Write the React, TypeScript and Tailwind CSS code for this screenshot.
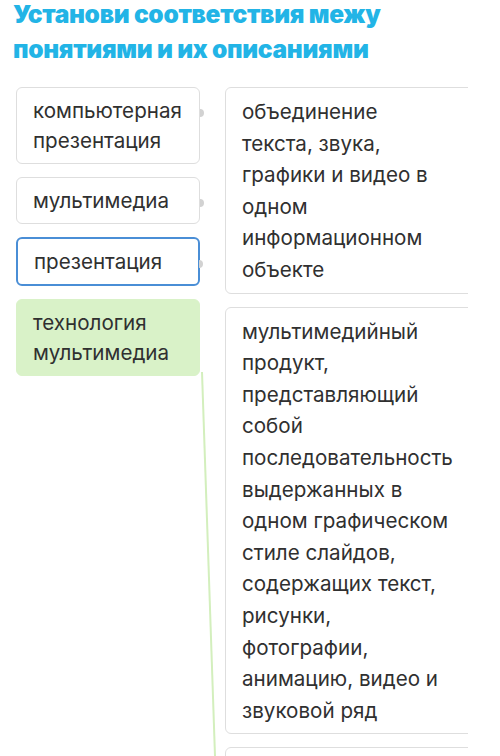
import React from 'react';

const left = [
  { text: 'компьютерная презентация', kind: 'plain' },
  { text: 'мультимедиа', kind: 'plain' },
  { text: 'презентация', kind: 'active' },
  { text: 'технология мультимедиа', kind: 'matched' },
];

// line breaks kept as in the app's narrow column
const right = [
  'объединение\nтекста, звука,\nграфики и видео в\nодном\nинформационном\nобъекте',
  'мультимедийный продукт, представляющий собой последовательность выдержанных в одном графическом стиле слайдов, содержащих текст, рисунки, фотографии, анимацию, видео и звуковой ряд',
  'изображение',
];

function Tab({ side }: { side: 'left' | 'right' }) {
  // little grey connector knob sitting on the card edge
  return (
    <span
      className={
        side === 'right'
          ? 'absolute -right-[5px] top-[21px] h-[8px] w-[4px] rounded-r-full bg-[#d2d2d2]'
          : 'absolute -left-[5px] top-[20px] h-[8px] w-[4px] rounded-l-full bg-[#d2d2d2]'
      }
    />
  );
}

export default function App() {
  return (
    <div className="relative h-[756px] w-[500px] overflow-hidden bg-white" style={{ fontFamily: 'Inter, "Noto Sans", sans-serif' }}>
      {/* Title */}
      <h1 className="-mt-[3px] pl-[13px] text-[24.5px] font-black leading-[35px] tracking-[-0.3px] text-[#22b4e6]">
        Установи соответствия межу
        <br />
        понятиями и их описаниями
      </h1>

      <div className="mt-[20px] flex pl-[16px]">
        {/* Concepts */}
        <div className="flex w-[184px] shrink-0 flex-col">
          {left.map((item, i) => (
            <div
              key={i}
              className={
                'relative rounded-[6px] px-[16px] pb-[7px] pt-[8px] text-[20.6px] leading-[30px] text-[#303030] ' +
                (i > 0 ? 'mt-[13px] ' : '') +
                (item.kind === 'active'
                  ? 'border-2 border-[#4a8ed6]'
                  : item.kind === 'matched'
                  ? 'border border-[#d9f2c8] bg-[#d9f2c8]'
                  : 'border border-[#dedede]')
              }
            >
              {item.text}
              {item.kind !== 'matched' && <Tab side="right" />}
            </div>
          ))}
        </div>

        {/* Descriptions, clipped at the right */}
        <div className="ml-[25px] w-[243px] shrink-0 overflow-hidden">
          <div className="flex w-[262px] flex-col gap-[13px]">
            {right.map((t, i) => (
              <div key={i} className="relative whitespace-pre-line rounded-[6px] border border-[#dedede] pb-[7px] pl-[16px] pr-[26px] pt-[8px] text-[20.6px] leading-[31.6px] text-[#303030]">
                {t}
                <Tab side="left" />
              </div>
            ))}
          </div>
        </div>
      </div>

      {/* connection line dragged from the matched card */}
      <svg className="pointer-events-none absolute left-0 top-0" width="500" height="756">
        <line x1="202" y1="372" x2="215" y2="756" stroke="#d3efbd" strokeWidth="2" />
      </svg>
    </div>
  );
}
